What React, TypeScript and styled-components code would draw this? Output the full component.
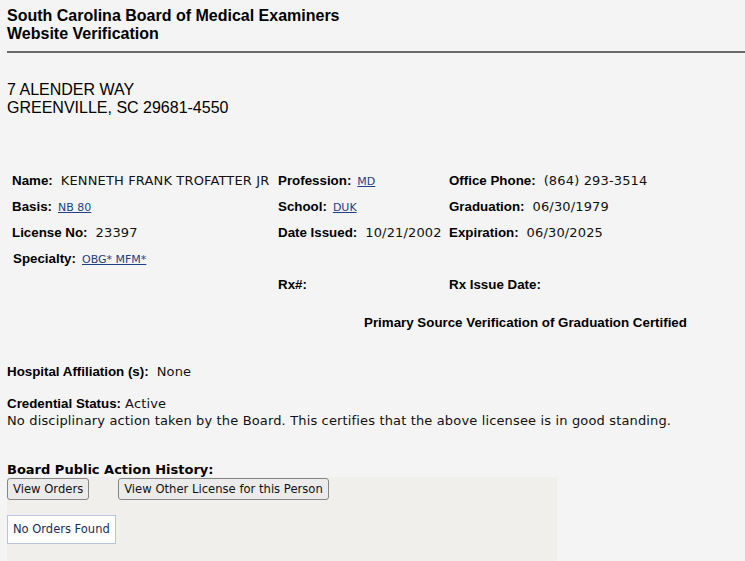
import styled, { createGlobalStyle } from 'styled-components';

const GlobalStyle = createGlobalStyle`
  html, body {
    margin: 0;
    padding: 0;
    background: #f4f4f4;
  }
`;

const rows = [
  [
    { label: 'Name:', value: 'KENNETH FRANK TROFATTER JR' },
    { label: 'Profession:', value: 'MD', link: true },
    { label: 'Office Phone:', value: '(864) 293-3514' },
  ],
  [
    { label: 'Basis:', value: 'NB 80', link: true },
    { label: 'School:', value: 'DUK', link: true },
    { label: 'Graduation:', value: '06/30/1979' },
  ],
  [
    { label: 'License No:', value: '23397' },
    { label: 'Date Issued:', value: '10/21/2002' },
    { label: 'Expiration:', value: '06/30/2025' },
  ],
  [{ label: 'Specialty:', value: 'OBG* MFM*', link: true, tight: true }, null, null],
  [null, { label: 'Rx#:', value: '' }, { label: 'Rx Issue Date:', value: '' }],
];

export default function App() {
  return (
    <Page>
      <GlobalStyle />
      <Header>
        South Carolina Board of Medical Examiners
        <br />
        Website Verification
      </Header>
      <Rule />

      <Address>
        7 ALENDER WAY
        <br />
        GREENVILLE, SC 29681-4550
      </Address>

      <InfoGrid>
        {rows.map((row, r) =>
          row.map((cell, c) => (
            <Cell key={`${r}-${c}`} $indent={cell?.tight ? 1 : 0}>
              {cell && (
                <>
                  <Label>{cell.label}</Label>
                  {cell.link ? (
                    <CodeLink href="#">{cell.value}</CodeLink>
                  ) : (
                    cell.value && <Value>{cell.value}</Value>
                  )}
                </>
              )}
            </Cell>
          ))
        )}
      </InfoGrid>

      <Certified>Primary Source Verification of Graduation Certified</Certified>

      <Hospital>
        <Label>Hospital Affiliation (s):</Label>
        <Value>None</Value>
      </Hospital>

      <StatusBlock>
        <TextLine>
          <Label>Credential Status:</Label> <Value>Active</Value>
        </TextLine>
        <TextLine>
          <Value>
            No disciplinary action taken by the Board. This certifies that the above licensee is in
            good standing.
          </Value>
        </TextLine>
      </StatusBlock>

      <HistoryTitle>Board Public Action History:</HistoryTitle>
      <ActionPanel>
        <ButtonRow>
          <ActionButton>View Orders</ActionButton>
          <ActionButton>View Other License for this Person</ActionButton>
        </ButtonRow>
        <EmptyBox>No Orders Found</EmptyBox>
      </ActionPanel>
    </Page>
  );
}

const Page = styled.div`
  padding: 7px 0 0 7px;
  font-family: 'Liberation Sans', Arial, sans-serif;
  color: #000;
`;

const Header = styled.div`
  font-size: 16px;
  font-weight: 700;
  line-height: 18px;
`;

const Rule = styled.div`
  height: 2px;
  background: #6a6a6a;
  margin-top: 8px;
`;

const Address = styled.div`
  font-size: 16px;
  line-height: 18px;
  margin-top: 28px;
`;

const InfoGrid = styled.div`
  display: grid;
  grid-template-columns: 266px 171px 1fr;
  grid-auto-rows: 26px;
  margin-top: 51px;
  padding-left: 5px;
`;

const Cell = styled.div<{ $indent: number }>`
  display: flex;
  align-items: center;
  gap: 8px;
  padding-left: ${({ $indent }) => $indent}px;
  white-space: nowrap;
`;

const Label = styled.span`
  font-family: 'Liberation Sans', Arial, sans-serif;
  font-size: 13.33px;
  font-weight: 700;
  line-height: 16px;
`;

const Value = styled.span`
  font-family: 'DejaVu Sans', Verdana, sans-serif;
  font-size: 13px;
  letter-spacing: 0.15px;
  line-height: 16px;
  color: #111;
`;

const CodeLink = styled.a`
  font-family: 'DejaVu Sans', Verdana, sans-serif;
  font-size: 11px;
  margin-left: -2px;
  color: #1f3f86;
  text-decoration: underline;
`;

const Certified = styled.div`
  font-size: 13.33px;
  font-weight: 700;
  line-height: 16px;
  margin-top: 17px;
  padding-left: 357px;
`;

const Hospital = styled.div`
  display: flex;
  align-items: center;
  gap: 8px;
  height: 16px;
  margin-top: 33px;
`;

const StatusBlock = styled.div`
  margin-top: 15px;
`;

const TextLine = styled.div`
  height: 17px;
  display: flex;
  align-items: center;
  gap: 4px;
  white-space: nowrap;
`;

const HistoryTitle = styled.div`
  font-family: 'DejaVu Sans', Verdana, sans-serif;
  font-size: 13px;
  font-weight: 700;
  line-height: 14px;
  height: 14px;
  margin-top: 34px;
`;

const ActionPanel = styled.div`
  width: 550px;
  height: 90px;
  background: #f1efeb;
  display: flex;
  flex-direction: column;
  align-items: flex-start;
`;

const ButtonRow = styled.div`
  display: flex;
  gap: 29px;
  margin-top: 1px;
`;

const ActionButton = styled.button`
  font-family: 'DejaVu Sans', Verdana, sans-serif;
  font-size: 11.6px;
  height: 22px;
  padding: 0 5px;
  color: #111;
  background: #ebebeb;
  border: 1px solid #858585;
  border-radius: 3px;
`;

const EmptyBox = styled.div`
  margin-top: 15px;
  padding: 0 5px;
  height: 27px;
  line-height: 27px;
  background: #fff;
  border: 1px solid #b8c4e2;
  font-family: 'DejaVu Sans', Verdana, sans-serif;
  font-size: 11.5px;
  color: #1c2c55;
`;
